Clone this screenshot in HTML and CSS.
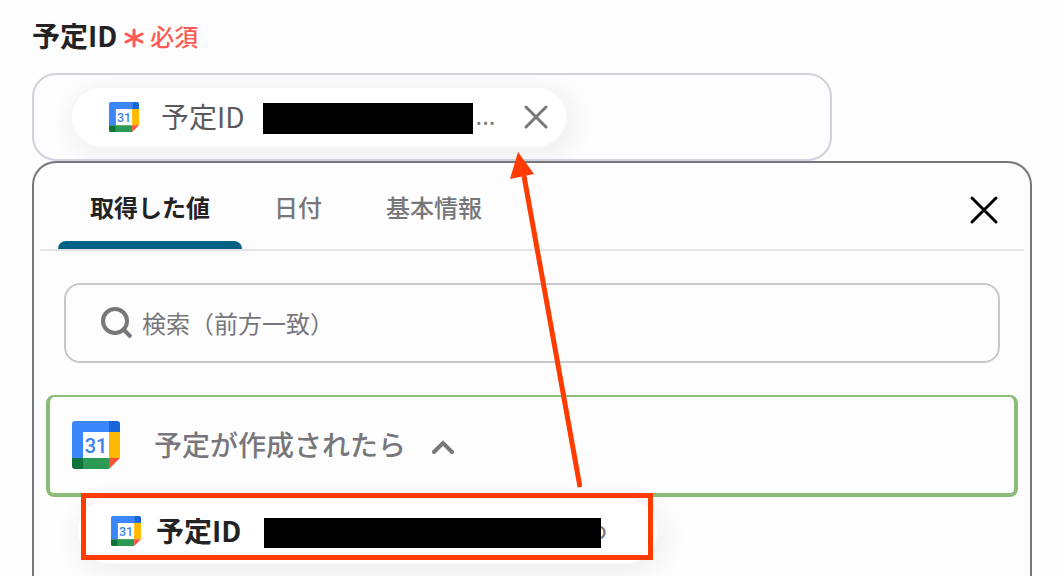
FILE: index.html
```html
<!DOCTYPE html>
<html lang="ja">
<head>
<meta charset="utf-8">
<meta name="viewport" content="width=device-width, initial-scale=1">
<title>予定ID</title>
<link rel="stylesheet" href="styles.css">
</head>
<body>
<svg class="defs" width="0" height="0" aria-hidden="true">
  <symbol id="calendar" viewBox="0 0 48 48">
    <path fill="#fff" d="M11 11h26v26H11z"/>
    <path fill="#3b86fb" d="M3 0h34v11H11v26H0V3a3 3 0 0 1 3-3z"/>
    <path fill="#1765d8" d="M37 0h8a3 3 0 0 1 3 3v8H37z"/>
    <path fill="#ffba00" d="M37 11h11v26H37z"/>
    <path fill="#2b9a55" d="M11 37h26v11H11z"/>
    <path fill="#0f723a" d="M0 37h11v11H3a3 3 0 0 1-3-3z"/>
    <path fill="#fb5238" d="M37 37h11L37 48z"/>
  </symbol>
</svg>
<main class="page">
  <div class="label-row">
    <h1 class="label">予定ID</h1>
    <svg class="asterisk" viewBox="0 0 20 20" aria-hidden="true"><path d="M10 2v16M2 6l16 8M18 6L2 14"/></svg>
    <span class="required">必須</span>
  </div>

  <div class="field">
    <div class="chip">
      <svg class="icon-small" viewBox="0 0 48 48" aria-hidden="true"><use href="#calendar" width="48" height="48"/><text class="calendar-day" x="24" y="32" text-anchor="middle">31</text></svg>
      <span class="chip-name">予定ID</span>
      <span class="redacted"></span>
      <span class="ellipsis">...</span>
      <button class="icon-button chip-remove" type="button" aria-label="削除">
        <svg viewBox="0 0 24 24"><path d="M2 2l20 20M22 2L2 22"/></svg>
      </button>
    </div>
  </div>

  <section class="panel">
    <div class="panel-head">
      <div class="tabs" role="tablist">
        <button class="tab tab-active" type="button" role="tab" aria-selected="true">取得した値</button>
        <button class="tab" type="button" role="tab" aria-selected="false">日付</button>
        <button class="tab" type="button" role="tab" aria-selected="false">基本情報</button>
      </div>
      <button class="icon-button panel-close" type="button" aria-label="閉じる">
        <svg viewBox="0 0 32 32"><path d="M4 4l24 24M28 4L4 28"/></svg>
      </button>
    </div>

    <label class="search">
      <svg class="search-icon" viewBox="0 0 32 32" aria-hidden="true"><circle cx="15" cy="14" r="12"/><path d="M23 22l8 8"/></svg>
      <input class="search-input" type="search" placeholder="検索（前方一致）" aria-label="検索（前方一致）">
    </label>

    <button class="group" type="button" aria-expanded="true">
      <svg class="icon-large" viewBox="0 0 48 48" aria-hidden="true"><use href="#calendar" width="48" height="48"/><text class="calendar-day" x="24" y="32" text-anchor="middle">31</text></svg>
      <span class="group-name">予定が作成されたら</span>
      <svg class="chevron" viewBox="0 0 22 14" aria-hidden="true"><path d="M2 12l9-9 9 9"/></svg>
    </button>

    <div class="option">
      <svg class="icon-small" viewBox="0 0 48 48" aria-hidden="true"><use href="#calendar" width="48" height="48"/><text class="calendar-day" x="24" y="32" text-anchor="middle">31</text></svg>
      <span class="option-name">予定ID</span>
      <span class="redacted redacted-wide"></span>
      <span class="option-tail">o</span>
      <span class="highlight"></span>
    </div>
  </section>

  <svg class="arrow" viewBox="0 0 72 336" aria-hidden="true">
    <path class="arrow-line" d="M14 24L70 335"/>
    <path class="arrow-head" d="M8 0l16 22L0 27z"/>
  </svg>
</main>
</body>
</html>
```
FILE: styles.css
```css
* {
  box-sizing: border-box;
}

body {
  margin: 0;
  background: #fdfdfd;
  color: #232325;
  font-family: "Noto Sans CJK JP", "Noto Sans", sans-serif;
}

button {
  padding: 0;
  border: 0;
  background: none;
  font: inherit;
  cursor: pointer;
}

svg {
  display: block;
  flex: none;
}

.defs {
  position: absolute;
}

.page {
  position: relative;
  display: flex;
  flex-direction: column;
  min-height: 100vh;
  padding: 0 32px;
}

.label-row {
  display: flex;
  align-items: center;
  height: 73px;
  padding-bottom: 3px;
}

.label {
  margin: 0;
  font-size: 28px;
  font-weight: 700;
}

.asterisk {
  width: 20px;
  height: 20px;
  margin: 6px 6px 0 7px;
}

.asterisk path {
  fill: none;
  stroke: #ff5a52;
  stroke-width: 3;
  stroke-linecap: round;
}

.required {
  color: #ff5a52;
  font-size: 24px;
  font-weight: 500;
}

.field {
  display: flex;
  width: 80%;
  padding: 11px 36px;
  border: 2px solid #d0d2dc;
  border-radius: 24px;
  overflow: hidden;
}

.chip,
.option {
  display: flex;
  align-items: center;
  background: #fff;
  border: 2px solid #f7f6f8;
  box-shadow: 4px 6px 28px rgba(60, 40, 70, 0.08);
}

.chip {
  height: 62px;
  padding: 0 18px 0 37px;
  border-radius: 31px;
}

.icon-small {
  width: 30px;
  height: 30px;
}

.icon-large {
  width: 48px;
  height: 48px;
}

.calendar-day {
  fill: #3b82ee;
  font: 500 20px Roboto, sans-serif;
}

.chip-name {
  margin: 0 0 2px 22px;
  color: #5a5a5e;
  font-size: 28px;
}

.redacted {
  width: 210px;
  height: 31px;
  margin: 2px 0 0 19px;
  background: #000;
}

.ellipsis {
  margin: 0 0 6px 2px;
  color: #77777b;
  font-size: 24px;
}

.icon-button svg {
  fill: none;
  stroke-linecap: round;
}

.chip-remove svg {
  width: 24px;
  height: 24px;
  stroke: #77777b;
  stroke-width: 3;
}

.chip-remove {
  margin-left: 28px;
}

.panel {
  flex: 1;
  padding: 0 6px;
  border: 2px solid #77777b;
  border-bottom: 0;
  border-radius: 24px 24px 0 0;
}

.panel-head {
  display: flex;
  align-items: center;
  justify-content: space-between;
  height: 88px;
  padding: 0 24px 0 18px;
  border-bottom: 2px solid #e4e4e6;
}

.tabs {
  display: flex;
  height: 100%;
}

.tab {
  display: flex;
  align-items: center;
  padding: 0 32px;
  color: #77777b;
  font-size: 24px;
  font-weight: 500;
}

.tab-active {
  position: relative;
  color: #232325;
  font-weight: 700;
}

.tab-active::after {
  content: "";
  position: absolute;
  right: 0;
  bottom: 0;
  left: 0;
  height: 8px;
  border-radius: 8px 8px 0 0;
  background: #006185;
}

.panel-close svg {
  width: 32px;
  height: 32px;
  stroke: #000;
  stroke-width: 3;
}

.panel-close {
  margin-top: 8px;
}

.search {
  display: flex;
  align-items: center;
  height: 80px;
  margin: 32px 24px;
  padding: 0 34px;
  border: 2px solid #c8c7ca;
  border-radius: 16px;
}

.search-icon {
  width: 32px;
  height: 32px;
  fill: none;
  stroke: #77777b;
  stroke-width: 4;
}

.search-input {
  flex: 1;
  min-width: 0;
  margin-left: 10px;
  padding: 0 0 2px;
  border: 0;
  outline: 0;
  background: none;
  color: #232325;
  font: 24px "Noto Sans CJK JP", sans-serif;
}

.search-input::placeholder {
  color: #77777b;
  opacity: 1;
}

.group {
  display: flex;
  align-items: center;
  width: calc(100% - 12px);
  height: 102px;
  margin: 0 6px;
  padding: 0 22px;
  border: 4px solid #8bbd78;
  border-top-width: 2px;
  border-radius: 8px;
}

.group-name {
  margin: 0 0 3px 34px;
  color: #77777b;
  font-size: 28px;
  font-weight: 500;
}

.chevron {
  width: 22px;
  height: 14px;
  margin: 4px 0 0 26px;
  fill: none;
  stroke: #77777b;
  stroke-width: 4;
  stroke-linecap: round;
}

.option {
  position: relative;
  width: 583px;
  height: 68px;
  margin: 0 36px 8px;
  padding-left: 33px;
  border-radius: 34px;
}

.option-name {
  margin: 0 0 2px 15px;
  font-size: 28px;
  font-weight: 700;
}

.redacted-wide {
  position: relative;
  z-index: 1;
  width: 337px;
  height: 30px;
  margin: 4px 0 0 23px;
}

.option-tail {
  margin: 0 0 6px -9px;
  color: #77777b;
  font-size: 24px;
}

.highlight {
  position: absolute;
  inset: -6px 4px 3px 3px;
  border: 5px solid #ff3b00;
}

.arrow {
  position: absolute;
  top: 152px;
  left: 510px;
  width: 72px;
  height: 336px;
}

.arrow-line {
  fill: none;
  stroke: #ff3b00;
  stroke-width: 5;
}

.arrow-head {
  fill: #ff3b00;
}
```
